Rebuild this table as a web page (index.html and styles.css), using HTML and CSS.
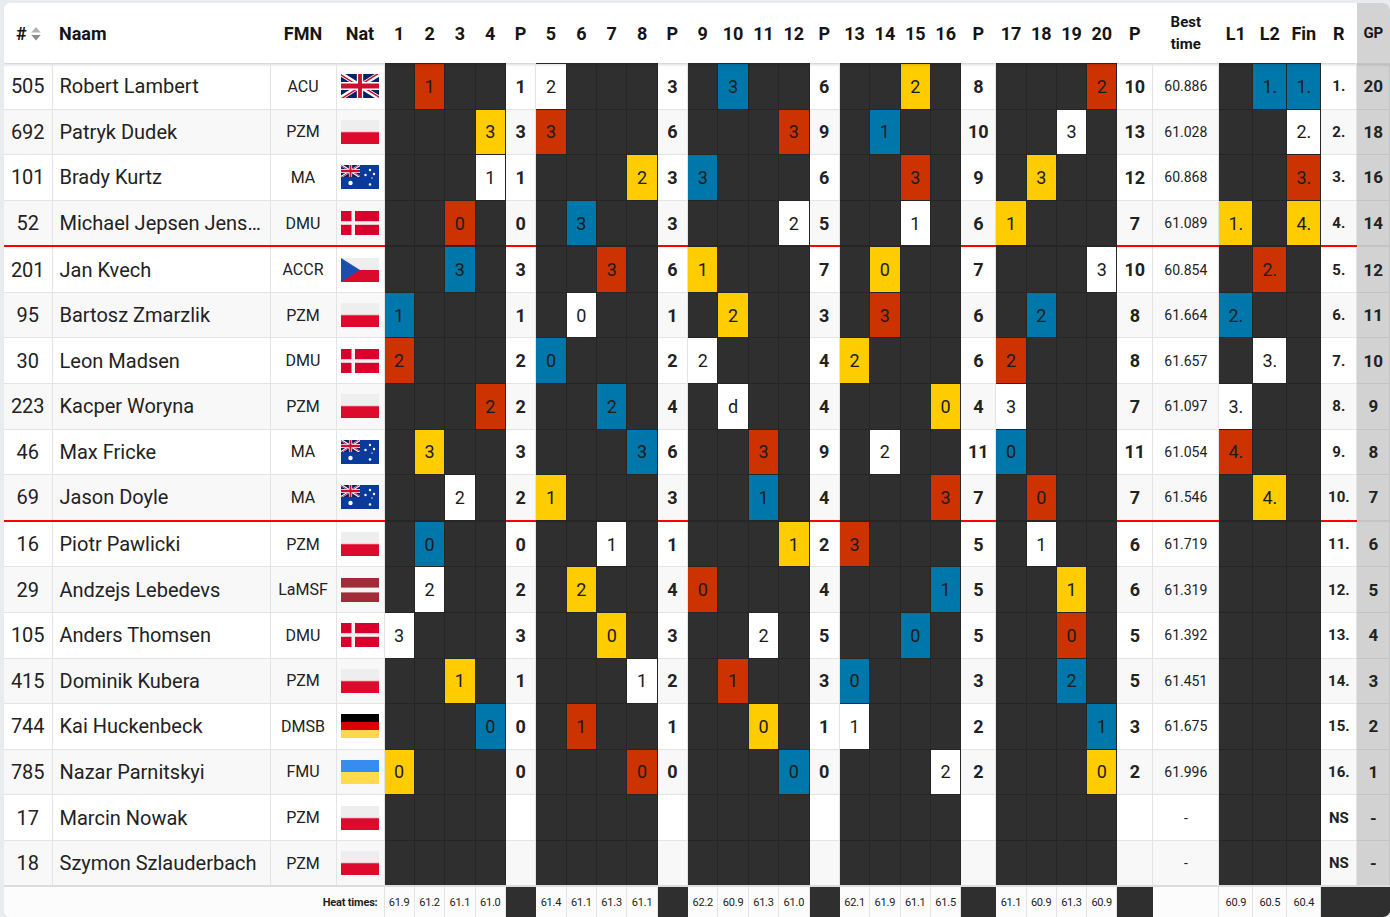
FILE: index.html
```html
<!DOCTYPE html>
<html lang="nl">
<head>
<meta charset="utf-8">
<title>Standings</title>
<link rel="stylesheet" href="styles.css">
</head>
<body>
<svg class="defs" aria-hidden="true">
  <defs>
    <clipPath id="ujc"><rect width="60" height="30"/></clipPath>
    <clipPath id="ujt"><path d="M30,15 h30 v15 z v15 h-30 z h-30 v-15 z v-15 h30 z"/></clipPath>
    <symbol id="uj" viewBox="0 0 60 30" preserveAspectRatio="none">
      <g clip-path="url(#ujc)">
        <rect width="60" height="30" fill="#012169"/>
        <path d="M0,0 L60,30 M60,0 L0,30" stroke="#fff" stroke-width="6"/>
        <path d="M0,0 L60,30 M60,0 L0,30" clip-path="url(#ujt)" stroke="#C8102E" stroke-width="4"/>
        <path d="M30,0 v30 M0,15 h60" stroke="#fff" stroke-width="10"/>
        <path d="M30,0 v30 M0,15 h60" stroke="#C8102E" stroke-width="6"/>
      </g>
    </symbol>
    <symbol id="gb" viewBox="0 0 38 24" preserveAspectRatio="none">
      <use href="#uj" x="0" y="0" width="38" height="24"/>
    </symbol>
    <symbol id="au" viewBox="0 0 38 24" preserveAspectRatio="none">
      <rect width="38" height="24" fill="#0a3a9a"/>
      <use href="#uj" x="0" y="0" width="19" height="12"/>
      <circle cx="9.5" cy="18" r="2.2" fill="#fff"/>
      <circle cx="29" cy="19.5" r="1.3" fill="#fff"/>
      <circle cx="24.5" cy="10" r="1.2" fill="#fff"/>
      <circle cx="29" cy="5" r="1.2" fill="#fff"/>
      <circle cx="33" cy="9" r="1.2" fill="#fff"/>
      <circle cx="31" cy="13" r="0.7" fill="#fff"/>
    </symbol>
    <symbol id="pl" viewBox="0 0 38 24" preserveAspectRatio="none">
      <rect width="38" height="12" fill="#eeeeee"/>
      <rect y="12" width="38" height="12" fill="#dc0a2d"/>
      <rect y="11.5" width="38" height="0.8" fill="#f3b6c0"/>
    </symbol>
    <symbol id="dk" viewBox="0 0 38 24" preserveAspectRatio="none">
      <rect width="38" height="24" fill="#d9002b"/>
      <rect x="10.5" width="3.5" height="24" fill="#f0f0f0"/>
      <rect y="10.2" width="38" height="3.6" fill="#f0f0f0"/>
    </symbol>
    <symbol id="cz" viewBox="0 0 38 24" preserveAspectRatio="none">
      <rect width="38" height="12" fill="#eeeeee"/>
      <rect y="12" width="38" height="12" fill="#db0a2d"/>
      <path d="M0,0 L19,12 L0,24 Z" fill="#1c4eb0"/>
    </symbol>
    <symbol id="lv" viewBox="0 0 38 24" preserveAspectRatio="none">
      <rect width="38" height="24" fill="#a02c3a"/>
      <rect y="9.6" width="38" height="4.8" fill="#f4f4f4"/>
    </symbol>
    <symbol id="de" viewBox="0 0 38 24" preserveAspectRatio="none">
      <rect width="38" height="8" fill="#000"/>
      <rect y="8" width="38" height="8" fill="#dd0000"/>
      <rect y="16" width="38" height="8" fill="#ffd84a"/>
    </symbol>
    <symbol id="ua" viewBox="0 0 38 24" preserveAspectRatio="none">
      <rect width="38" height="12" fill="#378cf0"/>
      <rect y="12" width="38" height="12" fill="#ffda4a"/>
    </symbol>
  </defs>
</svg>

<div class="card">
<table class="standings">
  <colgroup>
    <col class="c-no"><col class="c-nm"><col class="c-fmn"><col class="c-nat">
    <col class="c-h"><col class="c-h"><col class="c-h"><col class="c-h"><col class="c-h">
    <col class="c-h"><col class="c-h"><col class="c-h"><col class="c-h"><col class="c-h">
    <col class="c-h"><col class="c-h"><col class="c-h"><col class="c-h"><col class="c-h">
    <col class="c-h"><col class="c-h"><col class="c-h"><col class="c-h"><col class="c-p4">
    <col class="c-h2"><col class="c-h2"><col class="c-h2"><col class="c-h2"><col class="c-p5">
    <col class="c-best"><col class="c-f"><col class="c-f"><col class="c-f"><col class="c-r"><col class="c-gp">
  </colgroup>
  <thead>
    <tr>
      <th class="th-no">#<svg class="sort" viewBox="0 0 10 16"><path d="M5 1 L10 7 H0 Z" fill="#b3b3b3"/><path d="M5 15.5 L0 9.5 H10 Z" fill="#8c8c8c"/></svg></th>
      <th class="th-nm">Naam</th><th>FMN</th><th>Nat</th>
      <th>1</th><th>2</th><th>3</th><th>4</th><th>P</th>
      <th>5</th><th>6</th><th>7</th><th>8</th><th>P</th>
      <th>9</th><th>10</th><th>11</th><th>12</th><th>P</th>
      <th>13</th><th>14</th><th>15</th><th>16</th><th>P</th>
      <th>17</th><th>18</th><th>19</th><th>20</th><th>P</th>
      <th class="th-best">Best<br>time</th><th>L1</th><th>L2</th><th>Fin</th><th>R</th><th class="th-gp">GP</th>
    </tr>
  </thead>
  <tbody>
    <tr>
      <td class="no">505</td><td class="nm">Robert Lambert</td><td class="fmn">ACU</td><td class="nat"><svg class="flag"><use href="#gb"/></svg></td>
      <td class="h"></td><td class="h r">1</td><td class="h"></td><td class="h"></td><td class="p">1</td>
      <td class="h w">2</td><td class="h"></td><td class="h"></td><td class="h"></td><td class="p">3</td>
      <td class="h"></td><td class="h b">3</td><td class="h"></td><td class="h"></td><td class="p">6</td>
      <td class="h"></td><td class="h"></td><td class="h y">2</td><td class="h"></td><td class="p">8</td>
      <td class="h"></td><td class="h"></td><td class="h"></td><td class="h r">2</td><td class="p">10</td>
      <td class="best">60.886</td><td class="h"></td><td class="h b">1.</td><td class="h b">1.</td><td class="rk">1.</td><td class="gp">20</td>
    </tr>
    <tr>
      <td class="no">692</td><td class="nm">Patryk Dudek</td><td class="fmn">PZM</td><td class="nat"><svg class="flag"><use href="#pl"/></svg></td>
      <td class="h"></td><td class="h"></td><td class="h"></td><td class="h y">3</td><td class="p">3</td>
      <td class="h r">3</td><td class="h"></td><td class="h"></td><td class="h"></td><td class="p">6</td>
      <td class="h"></td><td class="h"></td><td class="h"></td><td class="h r">3</td><td class="p">9</td>
      <td class="h"></td><td class="h b">1</td><td class="h"></td><td class="h"></td><td class="p">10</td>
      <td class="h"></td><td class="h"></td><td class="h w">3</td><td class="h"></td><td class="p">13</td>
      <td class="best">61.028</td><td class="h"></td><td class="h"></td><td class="h w">2.</td><td class="rk">2.</td><td class="gp">18</td>
    </tr>
    <tr>
      <td class="no">101</td><td class="nm">Brady Kurtz</td><td class="fmn">MA</td><td class="nat"><svg class="flag"><use href="#au"/></svg></td>
      <td class="h"></td><td class="h"></td><td class="h"></td><td class="h w">1</td><td class="p">1</td>
      <td class="h"></td><td class="h"></td><td class="h"></td><td class="h y">2</td><td class="p">3</td>
      <td class="h b">3</td><td class="h"></td><td class="h"></td><td class="h"></td><td class="p">6</td>
      <td class="h"></td><td class="h"></td><td class="h r">3</td><td class="h"></td><td class="p">9</td>
      <td class="h"></td><td class="h y">3</td><td class="h"></td><td class="h"></td><td class="p">12</td>
      <td class="best">60.868</td><td class="h"></td><td class="h"></td><td class="h r">3.</td><td class="rk">3.</td><td class="gp">16</td>
    </tr>
    <tr class="sep">
      <td class="no">52</td><td class="nm">Michael Jepsen Jensen</td><td class="fmn">DMU</td><td class="nat"><svg class="flag"><use href="#dk"/></svg></td>
      <td class="h"></td><td class="h"></td><td class="h r">0</td><td class="h"></td><td class="p">0</td>
      <td class="h"></td><td class="h b">3</td><td class="h"></td><td class="h"></td><td class="p">3</td>
      <td class="h"></td><td class="h"></td><td class="h"></td><td class="h w">2</td><td class="p">5</td>
      <td class="h"></td><td class="h"></td><td class="h w">1</td><td class="h"></td><td class="p">6</td>
      <td class="h y">1</td><td class="h"></td><td class="h"></td><td class="h"></td><td class="p">7</td>
      <td class="best">61.089</td><td class="h y">1.</td><td class="h"></td><td class="h y">4.</td><td class="rk">4.</td><td class="gp">14</td>
    </tr>
    <tr>
      <td class="no">201</td><td class="nm">Jan Kvech</td><td class="fmn">ACCR</td><td class="nat"><svg class="flag"><use href="#cz"/></svg></td>
      <td class="h"></td><td class="h"></td><td class="h b">3</td><td class="h"></td><td class="p">3</td>
      <td class="h"></td><td class="h"></td><td class="h r">3</td><td class="h"></td><td class="p">6</td>
      <td class="h y">1</td><td class="h"></td><td class="h"></td><td class="h"></td><td class="p">7</td>
      <td class="h"></td><td class="h y">0</td><td class="h"></td><td class="h"></td><td class="p">7</td>
      <td class="h"></td><td class="h"></td><td class="h"></td><td class="h w">3</td><td class="p">10</td>
      <td class="best">60.854</td><td class="h"></td><td class="h r">2.</td><td class="h"></td><td class="rk">5.</td><td class="gp">12</td>
    </tr>
    <tr>
      <td class="no">95</td><td class="nm">Bartosz Zmarzlik</td><td class="fmn">PZM</td><td class="nat"><svg class="flag"><use href="#pl"/></svg></td>
      <td class="h b">1</td><td class="h"></td><td class="h"></td><td class="h"></td><td class="p">1</td>
      <td class="h"></td><td class="h w">0</td><td class="h"></td><td class="h"></td><td class="p">1</td>
      <td class="h"></td><td class="h y">2</td><td class="h"></td><td class="h"></td><td class="p">3</td>
      <td class="h"></td><td class="h r">3</td><td class="h"></td><td class="h"></td><td class="p">6</td>
      <td class="h"></td><td class="h b">2</td><td class="h"></td><td class="h"></td><td class="p">8</td>
      <td class="best">61.664</td><td class="h b">2.</td><td class="h"></td><td class="h"></td><td class="rk">6.</td><td class="gp">11</td>
    </tr>
    <tr>
      <td class="no">30</td><td class="nm">Leon Madsen</td><td class="fmn">DMU</td><td class="nat"><svg class="flag"><use href="#dk"/></svg></td>
      <td class="h r">2</td><td class="h"></td><td class="h"></td><td class="h"></td><td class="p">2</td>
      <td class="h b">0</td><td class="h"></td><td class="h"></td><td class="h"></td><td class="p">2</td>
      <td class="h w">2</td><td class="h"></td><td class="h"></td><td class="h"></td><td class="p">4</td>
      <td class="h y">2</td><td class="h"></td><td class="h"></td><td class="h"></td><td class="p">6</td>
      <td class="h r">2</td><td class="h"></td><td class="h"></td><td class="h"></td><td class="p">8</td>
      <td class="best">61.657</td><td class="h"></td><td class="h w">3.</td><td class="h"></td><td class="rk">7.</td><td class="gp">10</td>
    </tr>
    <tr>
      <td class="no">223</td><td class="nm">Kacper Woryna</td><td class="fmn">PZM</td><td class="nat"><svg class="flag"><use href="#pl"/></svg></td>
      <td class="h"></td><td class="h"></td><td class="h"></td><td class="h r">2</td><td class="p">2</td>
      <td class="h"></td><td class="h"></td><td class="h b">2</td><td class="h"></td><td class="p">4</td>
      <td class="h"></td><td class="h w">d</td><td class="h"></td><td class="h"></td><td class="p">4</td>
      <td class="h"></td><td class="h"></td><td class="h"></td><td class="h y">0</td><td class="p">4</td>
      <td class="h w">3</td><td class="h"></td><td class="h"></td><td class="h"></td><td class="p">7</td>
      <td class="best">61.097</td><td class="h w">3.</td><td class="h"></td><td class="h"></td><td class="rk">8.</td><td class="gp">9</td>
    </tr>
    <tr>
      <td class="no">46</td><td class="nm">Max Fricke</td><td class="fmn">MA</td><td class="nat"><svg class="flag"><use href="#au"/></svg></td>
      <td class="h"></td><td class="h y">3</td><td class="h"></td><td class="h"></td><td class="p">3</td>
      <td class="h"></td><td class="h"></td><td class="h"></td><td class="h b">3</td><td class="p">6</td>
      <td class="h"></td><td class="h"></td><td class="h r">3</td><td class="h"></td><td class="p">9</td>
      <td class="h"></td><td class="h w">2</td><td class="h"></td><td class="h"></td><td class="p">11</td>
      <td class="h b">0</td><td class="h"></td><td class="h"></td><td class="h"></td><td class="p">11</td>
      <td class="best">61.054</td><td class="h r">4.</td><td class="h"></td><td class="h"></td><td class="rk">9.</td><td class="gp">8</td>
    </tr>
    <tr class="sep">
      <td class="no">69</td><td class="nm">Jason Doyle</td><td class="fmn">MA</td><td class="nat"><svg class="flag"><use href="#au"/></svg></td>
      <td class="h"></td><td class="h"></td><td class="h w">2</td><td class="h"></td><td class="p">2</td>
      <td class="h y">1</td><td class="h"></td><td class="h"></td><td class="h"></td><td class="p">3</td>
      <td class="h"></td><td class="h"></td><td class="h b">1</td><td class="h"></td><td class="p">4</td>
      <td class="h"></td><td class="h"></td><td class="h"></td><td class="h r">3</td><td class="p">7</td>
      <td class="h"></td><td class="h r">0</td><td class="h"></td><td class="h"></td><td class="p">7</td>
      <td class="best">61.546</td><td class="h"></td><td class="h y">4.</td><td class="h"></td><td class="rk">10.</td><td class="gp">7</td>
    </tr>
    <tr>
      <td class="no">16</td><td class="nm">Piotr Pawlicki</td><td class="fmn">PZM</td><td class="nat"><svg class="flag"><use href="#pl"/></svg></td>
      <td class="h"></td><td class="h b">0</td><td class="h"></td><td class="h"></td><td class="p">0</td>
      <td class="h"></td><td class="h"></td><td class="h w">1</td><td class="h"></td><td class="p">1</td>
      <td class="h"></td><td class="h"></td><td class="h"></td><td class="h y">1</td><td class="p">2</td>
      <td class="h r">3</td><td class="h"></td><td class="h"></td><td class="h"></td><td class="p">5</td>
      <td class="h"></td><td class="h w">1</td><td class="h"></td><td class="h"></td><td class="p">6</td>
      <td class="best">61.719</td><td class="h"></td><td class="h"></td><td class="h"></td><td class="rk">11.</td><td class="gp">6</td>
    </tr>
    <tr>
      <td class="no">29</td><td class="nm">Andzejs Lebedevs</td><td class="fmn">LaMSF</td><td class="nat"><svg class="flag"><use href="#lv"/></svg></td>
      <td class="h"></td><td class="h w">2</td><td class="h"></td><td class="h"></td><td class="p">2</td>
      <td class="h"></td><td class="h y">2</td><td class="h"></td><td class="h"></td><td class="p">4</td>
      <td class="h r">0</td><td class="h"></td><td class="h"></td><td class="h"></td><td class="p">4</td>
      <td class="h"></td><td class="h"></td><td class="h"></td><td class="h b">1</td><td class="p">5</td>
      <td class="h"></td><td class="h"></td><td class="h y">1</td><td class="h"></td><td class="p">6</td>
      <td class="best">61.319</td><td class="h"></td><td class="h"></td><td class="h"></td><td class="rk">12.</td><td class="gp">5</td>
    </tr>
    <tr>
      <td class="no">105</td><td class="nm">Anders Thomsen</td><td class="fmn">DMU</td><td class="nat"><svg class="flag"><use href="#dk"/></svg></td>
      <td class="h w">3</td><td class="h"></td><td class="h"></td><td class="h"></td><td class="p">3</td>
      <td class="h"></td><td class="h"></td><td class="h y">0</td><td class="h"></td><td class="p">3</td>
      <td class="h"></td><td class="h"></td><td class="h w">2</td><td class="h"></td><td class="p">5</td>
      <td class="h"></td><td class="h"></td><td class="h b">0</td><td class="h"></td><td class="p">5</td>
      <td class="h"></td><td class="h"></td><td class="h r">0</td><td class="h"></td><td class="p">5</td>
      <td class="best">61.392</td><td class="h"></td><td class="h"></td><td class="h"></td><td class="rk">13.</td><td class="gp">4</td>
    </tr>
    <tr>
      <td class="no">415</td><td class="nm">Dominik Kubera</td><td class="fmn">PZM</td><td class="nat"><svg class="flag"><use href="#pl"/></svg></td>
      <td class="h"></td><td class="h"></td><td class="h y">1</td><td class="h"></td><td class="p">1</td>
      <td class="h"></td><td class="h"></td><td class="h"></td><td class="h w">1</td><td class="p">2</td>
      <td class="h"></td><td class="h r">1</td><td class="h"></td><td class="h"></td><td class="p">3</td>
      <td class="h b">0</td><td class="h"></td><td class="h"></td><td class="h"></td><td class="p">3</td>
      <td class="h"></td><td class="h"></td><td class="h b">2</td><td class="h"></td><td class="p">5</td>
      <td class="best">61.451</td><td class="h"></td><td class="h"></td><td class="h"></td><td class="rk">14.</td><td class="gp">3</td>
    </tr>
    <tr>
      <td class="no">744</td><td class="nm">Kai Huckenbeck</td><td class="fmn">DMSB</td><td class="nat"><svg class="flag"><use href="#de"/></svg></td>
      <td class="h"></td><td class="h"></td><td class="h"></td><td class="h b">0</td><td class="p">0</td>
      <td class="h"></td><td class="h r">1</td><td class="h"></td><td class="h"></td><td class="p">1</td>
      <td class="h"></td><td class="h"></td><td class="h y">0</td><td class="h"></td><td class="p">1</td>
      <td class="h w">1</td><td class="h"></td><td class="h"></td><td class="h"></td><td class="p">2</td>
      <td class="h"></td><td class="h"></td><td class="h"></td><td class="h b">1</td><td class="p">3</td>
      <td class="best">61.675</td><td class="h"></td><td class="h"></td><td class="h"></td><td class="rk">15.</td><td class="gp">2</td>
    </tr>
    <tr>
      <td class="no">785</td><td class="nm">Nazar Parnitskyi</td><td class="fmn">FMU</td><td class="nat"><svg class="flag"><use href="#ua"/></svg></td>
      <td class="h y">0</td><td class="h"></td><td class="h"></td><td class="h"></td><td class="p">0</td>
      <td class="h"></td><td class="h"></td><td class="h"></td><td class="h r">0</td><td class="p">0</td>
      <td class="h"></td><td class="h"></td><td class="h"></td><td class="h b">0</td><td class="p">0</td>
      <td class="h"></td><td class="h"></td><td class="h"></td><td class="h w">2</td><td class="p">2</td>
      <td class="h"></td><td class="h"></td><td class="h"></td><td class="h y">0</td><td class="p">2</td>
      <td class="best">61.996</td><td class="h"></td><td class="h"></td><td class="h"></td><td class="rk">16.</td><td class="gp">1</td>
    </tr>
    <tr>
      <td class="no">17</td><td class="nm">Marcin Nowak</td><td class="fmn">PZM</td><td class="nat"><svg class="flag"><use href="#pl"/></svg></td>
      <td class="h"></td><td class="h"></td><td class="h"></td><td class="h"></td><td class="p"></td>
      <td class="h"></td><td class="h"></td><td class="h"></td><td class="h"></td><td class="p"></td>
      <td class="h"></td><td class="h"></td><td class="h"></td><td class="h"></td><td class="p"></td>
      <td class="h"></td><td class="h"></td><td class="h"></td><td class="h"></td><td class="p"></td>
      <td class="h"></td><td class="h"></td><td class="h"></td><td class="h"></td><td class="p"></td>
      <td class="best">-</td><td class="h"></td><td class="h"></td><td class="h"></td><td class="rk">NS</td><td class="gp">-</td>
    </tr>
    <tr>
      <td class="no">18</td><td class="nm">Szymon Szlauderbach</td><td class="fmn">PZM</td><td class="nat"><svg class="flag"><use href="#pl"/></svg></td>
      <td class="h"></td><td class="h"></td><td class="h"></td><td class="h"></td><td class="p"></td>
      <td class="h"></td><td class="h"></td><td class="h"></td><td class="h"></td><td class="p"></td>
      <td class="h"></td><td class="h"></td><td class="h"></td><td class="h"></td><td class="p"></td>
      <td class="h"></td><td class="h"></td><td class="h"></td><td class="h"></td><td class="p"></td>
      <td class="h"></td><td class="h"></td><td class="h"></td><td class="h"></td><td class="p"></td>
      <td class="best">-</td><td class="h"></td><td class="h"></td><td class="h"></td><td class="rk">NS</td><td class="gp">-</td>
    </tr>
  </tbody>
  <tfoot>
    <tr>
      <td class="ft-label" colspan="4">Heat times:</td>
      <td>61.9</td><td>61.2</td><td>61.1</td><td>61.0</td><td class="dk"></td>
      <td>61.4</td><td>61.1</td><td>61.3</td><td>61.1</td><td class="dk"></td>
      <td>62.2</td><td>60.9</td><td>61.3</td><td>61.0</td><td class="dk"></td>
      <td>62.1</td><td>61.9</td><td>61.1</td><td>61.5</td><td class="dk"></td>
      <td>61.1</td><td>60.9</td><td>61.3</td><td>60.9</td><td class="dk"></td>
      <td></td><td>60.9</td><td>60.5</td><td>60.4</td><td class="dk"></td><td class="dk"></td>
    </tr>
  </tfoot>
</table>
</div>
</body>
</html>
```

FILE: styles.css
```css
html, body {
  margin: 0;
  padding: 0;
}

body {
  background: #e9ecef;
  font-family: Roboto, "Liberation Sans", Arial, sans-serif;
  color: #222;
}

.defs {
  position: absolute;
  width: 0;
  height: 0;
  overflow: hidden;
}

.card {
  margin: 3px 0 0 4px;
  width: 1386px;
  background: #fff;
  border-radius: 7px;
  overflow: hidden;
}

.standings {
  width: 1386px;
  border-collapse: collapse;
  table-layout: fixed;
}

.c-no { width: 48px; }
.c-nm { width: 218px; }
.c-fmn { width: 66px; }
.c-nat { width: 48px; }
.c-h { width: 30.37px; }
.c-p4 { width: 35px; }
.c-h2 { width: 30.25px; }
.c-p5 { width: 36px; }
.c-best { width: 66px; }
.c-f { width: 34px; }
.c-r { width: 36px; }
.c-gp { width: 33px; }

/* header */
.standings th {
  height: 60px;
  padding: 0;
  font-size: 18px;
  font-weight: 700;
  text-align: center;
  background: #fff;
  color: #151515;
  white-space: nowrap;
}

.standings th.th-no {
  text-align: left;
  padding-left: 12px;
}

.sort {
  width: 10px;
  height: 15px;
  margin-left: 4px;
  vertical-align: -1px;
}

.standings th.th-nm {
  text-align: left;
  padding-left: 7px;
}

.standings th.th-best {
  font-size: 15px;
  line-height: 22px;
}

.standings th.th-gp {
  background: #d3d3d3;
  font-size: 15px;
}

/* body cells */
.standings td {
  padding: 0;
  height: 44.58px;
  border: 1px solid #e4e4e4;
  text-align: center;
  font-size: 18px;
  white-space: nowrap;
  background: #fff;
}

.standings tbody tr:nth-child(even) td {
  background: #f8f8f8;
}

.standings tbody tr:first-child td {
  border-top: 1px solid #d8d8d8;
  box-shadow: inset 0 3px 3px -2px rgba(0, 0, 0, 0.14);
}

.standings td.no {
  font-size: 20px;
  border-left: none;
}

.standings td.nm {
  text-align: left;
  padding-left: 7px;
  padding-right: 7px;
  font-size: 20px;
  overflow: hidden;
  text-overflow: ellipsis;
}

.standings td.fmn {
  font-size: 16px;
}

.flag {
  display: block;
  width: 38px;
  height: 24px;
  margin: 0 auto;
}

/* heat grid */
.standings tbody tr td.h,
.standings tbody tr:nth-child(even) td.h {
  background: #2f2f2f;
  border-color: #262626;
  color: #1b1b1b;
}

.standings tbody tr td.h.r,
.standings tbody tr:nth-child(even) td.h.r { background: #cc3300; }
.standings tbody tr td.h.b,
.standings tbody tr:nth-child(even) td.h.b { background: #0077aa; }
.standings tbody tr td.h.y,
.standings tbody tr:nth-child(even) td.h.y { background: #ffcc00; }
.standings tbody tr td.h.w,
.standings tbody tr:nth-child(even) td.h.w { background: #ffffff; }

.standings td.p {
  font-weight: 700;
}

.standings td.best {
  font-size: 14px;
}

.standings td.rk {
  font-size: 15px;
  font-weight: 700;
}

.standings tbody tr td.gp,
.standings tbody tr:nth-child(even) td.gp {
  background: #d2d2d2;
  border-color: #c4c4c4;
  font-size: 17px;
  font-weight: 700;
}

.standings tbody tr.sep td {
  border-bottom: 2px solid #ff0000;
}

/* footer */
.standings tfoot td {
  height: 30px;
  font-size: 11px;
  border-top: 2px solid #dcdcdc;
  border-bottom: none;
  background: #fcfcfc;
  letter-spacing: -0.2px;
}

.standings tfoot td.ft-label {
  text-align: right;
  padding-right: 6px;
  font-weight: 700;
  border-left: none;
}

.standings tfoot td.dk {
  background: #2f2f2f;
  border-color: #2f2f2f;
  border-top: 2px solid #dcdcdc;
}
```
